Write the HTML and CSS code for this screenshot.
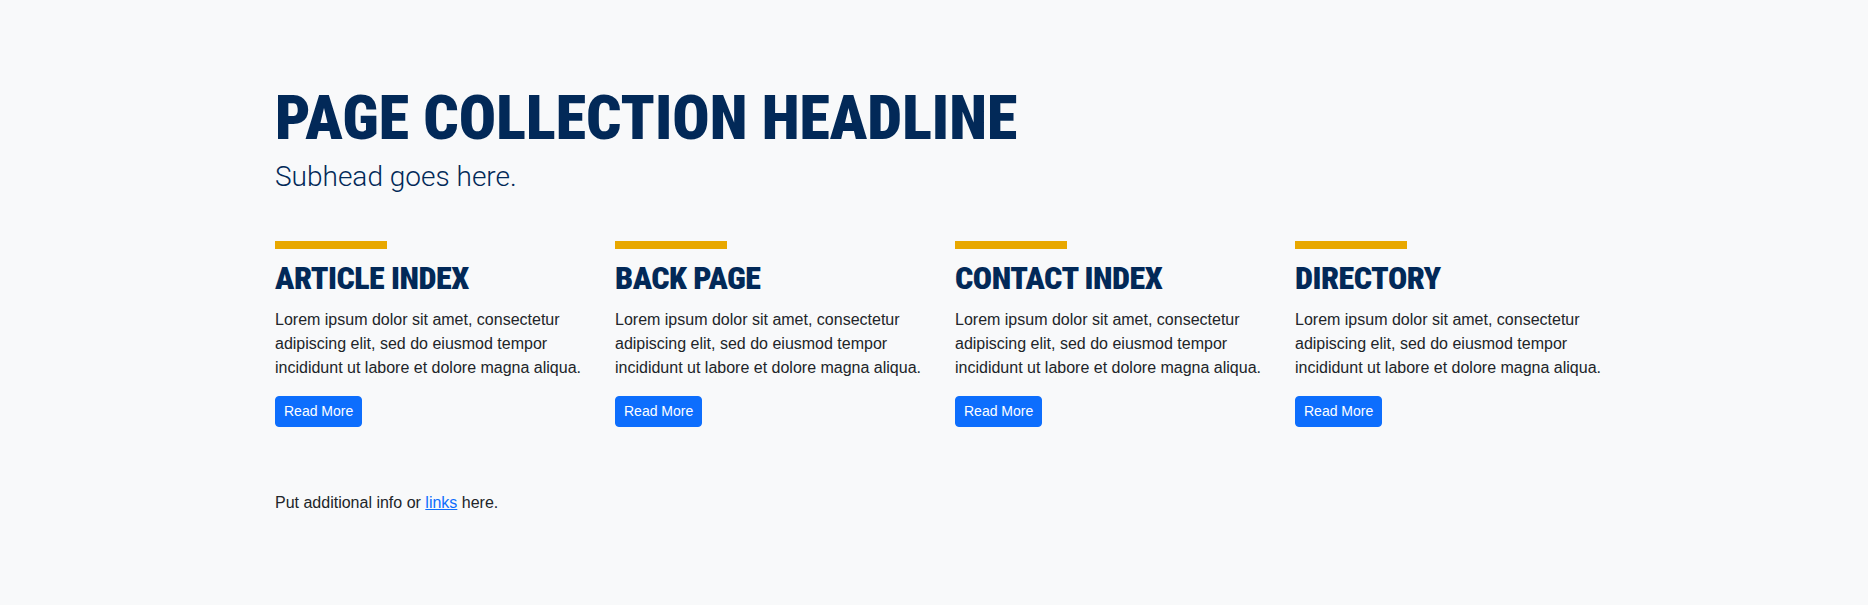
FILE: index.html
```html
<!DOCTYPE html>
<html lang="en">
<head>
<meta charset="utf-8">
<title>Page Collection</title>
<link rel="stylesheet" href="styles.css">
</head>
<body>
<main class="page">
  <header class="page-header">
    <h1 class="headline">PAGE COLLECTION HEADLINE</h1>
    <p class="subhead">Subhead goes here.</p>
  </header>
  <section class="cards">
    <article class="card">
      <div class="card-bar"></div>
      <h2 class="card-title">ARTICLE INDEX</h2>
      <p class="card-text">Lorem ipsum dolor sit amet, consectetur adipiscing elit, sed do eiusmod tempor incididunt ut labore et dolore magna aliqua.</p>
      <a class="btn" href="#">Read More</a>
    </article>
    <article class="card">
      <div class="card-bar"></div>
      <h2 class="card-title">BACK PAGE</h2>
      <p class="card-text">Lorem ipsum dolor sit amet, consectetur adipiscing elit, sed do eiusmod tempor incididunt ut labore et dolore magna aliqua.</p>
      <a class="btn" href="#">Read More</a>
    </article>
    <article class="card">
      <div class="card-bar"></div>
      <h2 class="card-title">CONTACT INDEX</h2>
      <p class="card-text">Lorem ipsum dolor sit amet, consectetur adipiscing elit, sed do eiusmod tempor incididunt ut labore et dolore magna aliqua.</p>
      <a class="btn" href="#">Read More</a>
    </article>
    <article class="card">
      <div class="card-bar"></div>
      <h2 class="card-title">DIRECTORY</h2>
      <p class="card-text">Lorem ipsum dolor sit amet, consectetur adipiscing elit, sed do eiusmod tempor incididunt ut labore et dolore magna aliqua.</p>
      <a class="btn" href="#">Read More</a>
    </article>
  </section>
  <p class="footnote">Put additional info or <a class="link" href="#">links</a> here.</p>
</main>
</body>
</html>
```
FILE: styles.css
```css
html, body {
  margin: 0;
  padding: 0;
  background: #f8f9fa;
}
body {
  font-family: "Liberation Sans", Arial, sans-serif;
  font-size: 16px;
  color: #212529;
}
.page {
  width: 1318px;
  margin: 0 auto;
  padding-top: 84px;
}
.headline {
  margin: 0;
  font-family: "Roboto", sans-serif;
  font-weight: 900;
  font-stretch: 75%;
  font-size: 62px;
  line-height: 68px;
  color: #022958;
}
.subhead {
  margin: 4px 0 0;
  font-family: "Roboto", sans-serif;
  font-weight: 300;
  font-size: 28px;
  line-height: 42px;
  color: #022958;
}
.cards {
  display: grid;
  grid-template-columns: repeat(4, 316px);
  column-gap: 24px;
  margin-top: 43px;
}
.card {
  display: flex;
  flex-direction: column;
  align-items: flex-start;
}
.card-bar {
  width: 112px;
  height: 8px;
  background: #e8a800;
}
.card-title {
  margin: 10px 0 11px;
  font-family: "Roboto", sans-serif;
  font-weight: 900;
  font-stretch: 75%;
  font-size: 32px;
  line-height: 38px;
  letter-spacing: -0.5px;
  color: #022958;
}
.card-text {
  margin: 0 0 16px;
  line-height: 24px;
}
.btn {
  display: inline-block;
  font-size: 14px;
  line-height: 21px;
  padding: 4px 8px;
  border: 1px solid #0d6efd;
  border-radius: 4px;
  background: #0d6efd;
  color: #fff;
  text-decoration: none;
}
.footnote {
  margin: 64px 0 0;
  line-height: 24px;
}
.link {
  color: #0d6efd;
  text-decoration: underline;
}
```
